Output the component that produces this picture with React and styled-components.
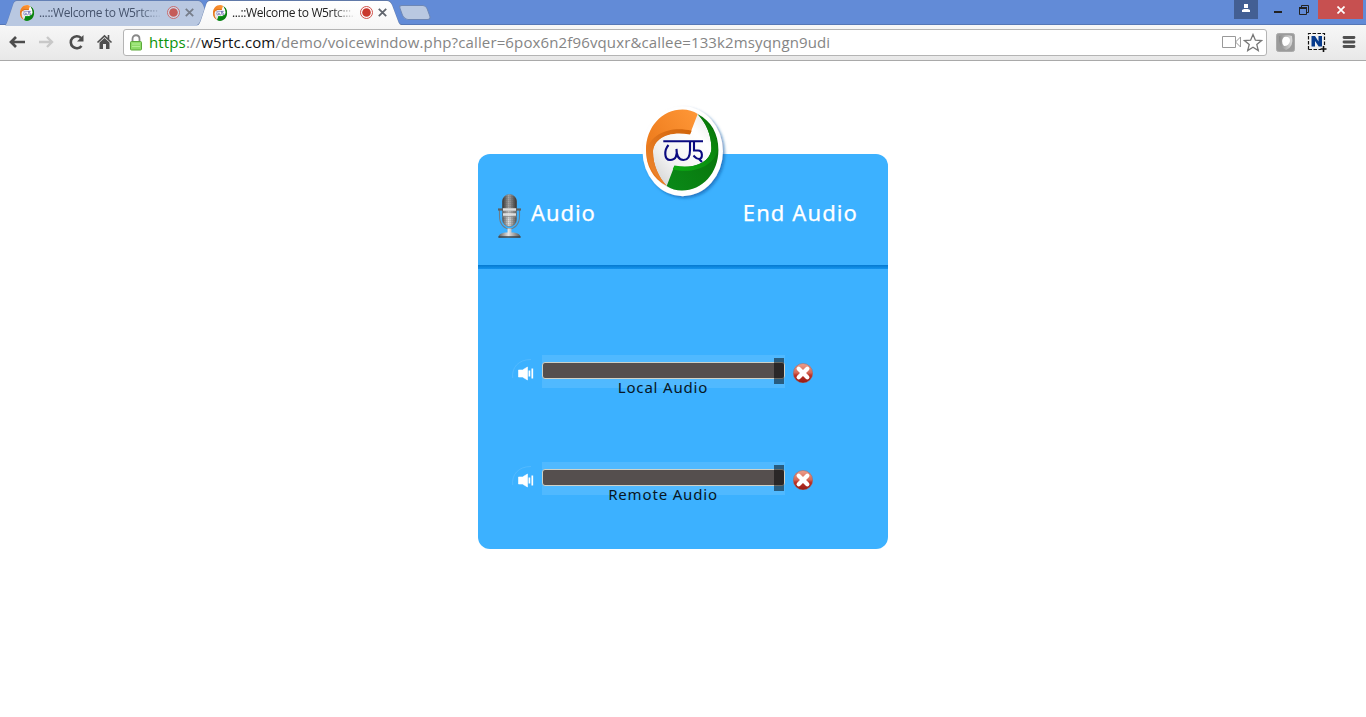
import React from "react";
import styled, { createGlobalStyle } from "styled-components";

const Global = createGlobalStyle`
  * { box-sizing: border-box; }
  body { margin: 0; background: #fff; overflow: hidden; }
  svg { display: block; flex: none; }
`;

const Screen = styled.div`
  width: 1366px;
  height: 717px;
  display: flex;
  flex-direction: column;
  font-family: "Open Sans", "Noto Sans", sans-serif;
`;

const TitleBar = styled.header`
  height: 25px;
  flex: none;
  display: flex;
  align-items: flex-start;
  padding-left: 5px;
  background: #628bd7;
  border-bottom: 1px solid #5577b6;
`;

const Tab = styled.div`
  position: relative;
  isolation: isolate;
  width: ${(p) => (p.$active ? 208 : 200)}px;
  height: 25px;
  margin-left: ${(p) => (p.$active ? -8 : 0)}px;
  padding-left: ${(p) => (p.$active ? 15 : 14)}px;
  display: flex;
  align-items: center;
  z-index: ${(p) => (p.$active ? 2 : 1)};
  &::before, &::after {
    content: "";
    position: absolute;
    inset: 0;
    z-index: -2;
    background: ${(p) => (p.$active ? "#6079a8" : "#6581b6")};
    clip-path: ${(p) =>
      p.$active
        ? 'path("M0 25C2 24 3 22 4 19L9 4Q10 0 13 0H190Q193 0 195 4L201 20Q202 24 206 25Z")'
        : 'path("M0 25C1 24 2 22 3 19L8 4Q9 0 12 0H193Q196 0 198 4L200 9V25Z")'};
  }
  &::after {
    z-index: -1;
    transform: translateY(1px);
    background: ${(p) => (p.$active ? "linear-gradient(#fff, #f7f7f7)" : "#b9c8e1")};
  }
`;

const TabTitle = styled.span`
  width: 126px;
  margin-left: 4px;
  white-space: nowrap;
  font: 12px/16px "Open Sans", sans-serif;
  letter-spacing: -0.36px;
  color: ${(p) => (p.$active ? "#222" : "#46546d")};
  mask-image: linear-gradient(90deg, #000 100px, transparent 123px);
`;

const TabControls = styled.div`
  display: flex;
  align-items: center;
  gap: 5px;
  margin-left: 2px;
  opacity: ${(p) => (p.$active ? 1 : 0.75)};
`;

const NewTab = styled.div`
  width: 28px;
  height: 15px;
  margin: 5px 0 0 -4px;
  border: 1px solid #6e87b5;
  border-radius: 3px 4px 4px 5px;
  background: #b9c8e1;
  transform: skewX(20deg);
`;

const WindowButtons = styled.div`
  margin-left: auto;
  display: flex;
  height: 19px;
`;

const WindowButton = styled.div`
  width: ${(p) => p.$w}px;
  height: 19px;
  padding-bottom: ${(p) => p.$lift || 0}px;
  display: flex;
  align-items: center;
  justify-content: center;
  background: ${(p) => p.$bg || "transparent"};
`;

const Toolbar = styled.nav`
  height: 36px;
  flex: none;
  display: flex;
  align-items: center;
  padding: 0 8px 1px;
  background: linear-gradient(#f7f7f7, #e8e8e8);
  border-bottom: 1px solid #a9a9a9;
`;

const NavIcons = styled.div`
  display: flex;
  align-items: center;
  gap: 12px;
  width: 115px;
  svg:nth-child(n + 3) { margin-left: -0.5px; }
`;

const Address = styled.div`
  width: 1144px;
  height: 27px;
  display: flex;
  align-items: center;
  padding: 0 3px 0 6px;
  border: 1px solid #b4b4b4;
  border-radius: 3px;
  background: #fff;
`;

const Url = styled.div`
  flex: 1;
  margin-left: 7px;
  font: 15px/22px "Open Sans", sans-serif;
  letter-spacing: 0.135px;
  color: #858585;
  white-space: nowrap;
`;
const Secure = styled.span`color: #0a930a;`;
const Host = styled.span`color: #111;`;

const Extensions = styled.div`
  display: flex;
  align-items: center;
  gap: 12px;
  margin-left: 9px;
`;

const Page = styled.main`
  flex: 1;
  display: flex;
  justify-content: center;
  align-items: flex-start;
  padding-top: 93px;
`;

const Card = styled.section`
  position: relative;
  width: 410px;
  height: 395px;
  border-radius: 12px;
  background: #3cb1ff;
  font-family: "Noto Sans", sans-serif;
`;

const Logo = styled.div`
  position: absolute;
  left: 161px;
  top: -51px;
`;

const CardHeader = styled.div`
  height: 115px;
  display: flex;
  align-items: flex-start;
  padding: 40px 30px 0 19px;
  background: linear-gradient(#0579cf, #1494ee) bottom / 100% 4px no-repeat;
`;

const Heading = styled.div`
  margin: ${(p) => (p.$end ? "0 0 0 auto" : "0 0 0 7px")};
  padding-top: 3px;
  font-size: 22px;
  line-height: 30px;
  letter-spacing: ${(p) => (p.$end ? 1.1 : 0.9)}px;
  color: #fff;
  white-space: nowrap;
  -webkit-text-stroke: 0.25px #fff;
`;

const Channels = styled.div`
  display: flex;
  flex-direction: column;
  gap: 74px;
  padding: 86px 0 0 33px;
`;

const Channel = styled.div`
  display: flex;
  height: 33px;
`;

const SpeakerSlot = styled.div`
  width: 31px;
  padding-top: 3px;
`;

const Slider = styled.div`
  width: 243px;
  height: 33px;
  padding-top: 7px;
  background: #50b9ff;
`;

const Track = styled.div`
  height: 17px;
  display: flex;
  justify-content: flex-end;
  border: 1px solid #cfd2c8;
  border-radius: 3px;
  background: #554f4e;
`;

const Thumb = styled.div`
  width: 10px;
  height: 26px;
  margin-top: -5px;
  background: rgba(0, 0, 0, 0.5);
`;

const Label = styled.div`
  margin-top: -2px;
  padding-right: 1px;
  font-size: 15px;
  line-height: 20px;
  letter-spacing: 0.83px;
  text-align: center;
  color: #071624;
`;

const CloseSlot = styled.div`
  padding: 8px 0 0 8px;
`;

function Swirl({ fill, edge }) {
  return (
    <>
      <path d="M27.7 82.700C14 76 7 63 7 47C7 24 23 6.500 43.500 6.500Q52 6.500 58.700 11L51 31C28 27 14 37 14 49C14 62 20 75 27.700 82.700Z" fill={fill} />
      <path d="M7.500 47C12 31 31 22.500 52.700 27.700L51 31.500C28 27 14 37 14 49C14 62 20 75 27.700 82.700C15 74 8 62 7.500 47Z" fill={edge} />
    </>
  );
}

function Emblem({ id }) {
  return (
    <>
      <defs>
        <linearGradient id={id + "o"} x1="0" y1="1" x2="1" y2="0">
          <stop offset="0" stopColor="#e67012" /><stop offset="1" stopColor="#ff9838" />
        </linearGradient>
        <linearGradient id={id + "oe"} x1="0" y1="1" x2="1" y2="0">
          <stop offset="0" stopColor="#f08a35" /><stop offset=".5" stopColor="#e0741c" /><stop offset="1" stopColor="#cf6208" />
        </linearGradient>
        <linearGradient id={id + "g"} x1="1" y1="0" x2="0" y2="1">
          <stop offset="0" stopColor="#0a8a18" /><stop offset="1" stopColor="#087008" />
        </linearGradient>
        <linearGradient id={id + "ge"} x1="1" y1="0" x2="0" y2="1">
          <stop offset="0" stopColor="#0cae15" /><stop offset="1" stopColor="#087008" />
        </linearGradient>
        <linearGradient id={id + "w"} x1="0" y1="1" x2="1" y2="0">
          <stop offset="0" stopColor="#c4c4c4" /><stop offset=".35" stopColor="#f2f2f2" /><stop offset=".7" stopColor="#fff" /><stop offset="1" stopColor="#dedede" />
        </linearGradient>
      </defs>
      <ellipse cx="43.200" cy="47" rx="36.200" ry="40.500" fill={`url(#${id}w)`} />
      <Swirl fill={`url(#${id}o)`} edge={`url(#${id}oe)`} />
      <g transform="rotate(180 43.200 47)"><Swirl fill={`url(#${id}g)`} edge={`url(#${id}ge)`} /></g>
      <path d="M24.300 38.300H64M29.500 42C25 47 25 57 31 57C37 57 38.500 52 37.500 46C37.500 53 39 57 44.500 57C50 57 51 52 51 47V38.300M55 38.300V47.500H59C64 47.500 64 55.500 60 56C57.500 56 56 54 54.500 52.500M60 56L63 59" fill="none" stroke="#0a0a80" strokeWidth="2.100" />
    </>
  );
}

function BigLogo() {
  return (
    <svg width="90" height="101" viewBox="0 0 90 101">
      <defs><filter id="shade" x="-20%" y="-20%" width="150%" height="150%"><feDropShadow dx="2" dy="2" stdDeviation="1.500" floodColor="#075da8" floodOpacity=".65" /></filter></defs>
      <ellipse cx="43.700" cy="48.200" rx="40.200" ry="45" fill="#fff" filter="url(#shade)" />
      <Emblem id="big" />
    </svg>
  );
}

const Favicon = ({ id }) => (
  <svg width="16" height="16" viewBox="2 6 82 82" preserveAspectRatio="none"><Emblem id={id} /></svg>
);

const Mic = () => (
  <svg width="27" height="46" viewBox="0 0 27 46">
    <defs>
      <linearGradient id="metal"><stop offset="0" stopColor="#5c5c5c" /><stop offset=".45" stopColor="#e6e6e6" /><stop offset="1" stopColor="#555" /></linearGradient>
      <linearGradient id="dome"><stop offset="0" stopColor="#333" /><stop offset=".45" stopColor="#aaa" /><stop offset="1" stopColor="#333" /></linearGradient>
      <pattern id="mesh" width="2" height="2" patternUnits="userSpaceOnUse"><path d="M0 .5H2M.5 0V2" stroke="#444" strokeWidth=".5" opacity=".3" /></pattern>
    </defs>
    <path d="M2.500 16V22C2.500 39 22.500 39 22.500 22V16" fill="none" stroke="#6e7e88" strokeWidth="1.100" />
    <rect x="5.500" y=".5" width="14" height="32" rx="7" fill="url(#metal)" stroke="#666" strokeWidth=".6" />
    <path d="M5.500 14V7.500C5.500-1.500 19.500-1.500 19.500 7.500V14Z" fill="url(#dome)" />
    <rect x="5.500" y="1" width="14" height="31" rx="7" fill="url(#mesh)" />
    <path d="M1 15.500H24" stroke="#5a6063" strokeWidth="2.200" />
    <path d="M6 15.500H19M6 20.500H19" stroke="#dedede" strokeWidth="2.600" />
    <path d="M5.500 18H19.500M5.500 22.700H19.500" stroke="#8a8a8a" strokeWidth=".8" />
    <path d="M10.500 34.500H14.500V38.500C20 38.500 23.500 40 23.500 43.500H1.500C1.500 40 5 38.500 10.500 38.500Z" fill="url(#metal)" />
    <path d="M1.500 43H23.500" stroke="#39454b" strokeWidth="1.500" />
  </svg>
);

const Speaker = () => (
  <svg width="31" height="28" viewBox="0 0 31 28">
    <path d="M1.700 20C.5 10 7 1.500 20 1.500" fill="none" stroke="#62c1ff" strokeWidth=".8" opacity=".7" />
    <path d="M7.500 12H11.500L16.500 9V22L11.500 19H7.500Z" fill="#fff" stroke="#fff" strokeWidth=".6" />
    <path d="M18.400 12.500V18.500M21.300 10.500V20.500" stroke="#fff" strokeWidth="1.700" />
  </svg>
);

const CloseBall = ({ id }) => (
  <svg width="20" height="20" viewBox="0 0 20 20">
    <defs><linearGradient id={id} x1="0" y1="0" x2="0" y2="1"><stop offset="0" stopColor="#eca08e" /><stop offset=".48" stopColor="#d56755" /><stop offset=".6" stopColor="#bd3228" /><stop offset="1" stopColor="#941a14" /></linearGradient></defs>
    <circle cx="10" cy="10.200" r="9.700" fill={`url(#${id})`} stroke="#a6625b" strokeWidth=".5" />
    <path d="M5.700 5.700L14.300 14.300M14.300 5.700L5.700 14.300" stroke="#fff" strokeWidth="4.300" strokeLinecap="round" />
  </svg>
);

const BrowserTab = ({ active, id }) => (
  <Tab $active={active}>
    <Favicon id={id} />
    <TabTitle $active={active}>...::Welcome to W5rtc:::...</TabTitle>
    <TabControls $active={active}>
      <svg width="13" height="13" viewBox="0 0 13 13"><circle cx="6.500" cy="6.500" r="6" fill="#fff" fillOpacity=".4" stroke="#cc4038" strokeWidth=".9" /><circle cx="6.500" cy="6.500" r="4.300" fill="#c9372c" /></svg>
      <svg width="9" height="9" viewBox="0 0 9 9"><path d="M.8.800L8.200 8.200M8.200.800L.8 8.200" stroke="#60656d" strokeWidth="1.800" /></svg>
    </TabControls>
  </Tab>
);

const AudioChannel = ({ name, id }) => (
  <Channel>
    <SpeakerSlot><Speaker /></SpeakerSlot>
    <Slider><Track><Thumb /></Track><Label>{name}</Label></Slider>
    <CloseSlot><CloseBall id={id} /></CloseSlot>
  </Channel>
);

export default function App() {
  return (
    <Screen>
      <Global />
      <TitleBar>
        <BrowserTab id="tab1" />
        <BrowserTab id="tab2" active />
        <NewTab />
        <WindowButtons>
          <WindowButton $w={24} $lift={3} $bg="#435f93"><svg width="8" height="9" viewBox="0 0 8 9"><path d="M2 0H6V4H2ZM0 8V6L2 5H6L8 6V8Z" fill="#fff" /></svg></WindowButton>
          <WindowButton $w={40}><svg width="8" height="9"><path d="M0 6H8V8H0Z" fill="#222" /></svg></WindowButton>
          <WindowButton $w={12}><svg width="10" height="10"><path d="M.5 2.500H7.500V9.500H.5ZM2.500 2V.500H9.500V7.500H8" fill="none" stroke="#222" /><path d="M0 2H8V4H0Z" fill="#222" /></svg></WindowButton>
          <WindowButton $w={8} />
          <WindowButton $w={45} $bg="#c75050"><svg width="8" height="8"><path d="M.5.500L7.500 7.500M7.500.500L.5 7.500" stroke="#fff" strokeWidth="1.700" /></svg></WindowButton>
          <WindowButton $w={3} />
        </WindowButtons>
      </TitleBar>
      <Toolbar>
        <NavIcons>
          <svg width="18" height="16"><path d="M8 3L3 8L8 13M3 8H17" fill="none" stroke="#4c4c4c" strokeWidth="2.700" /></svg>
          <svg width="18" height="16"><path d="M9 3L14 8L9 13M14 8H1" fill="none" stroke="#c8c8c8" strokeWidth="2.400" /></svg>
          <svg width="17" height="17"><path d="M13.500 12A6 6 0 1 1 13 4" fill="none" stroke="#4d4d4d" strokeWidth="2.600" /><path d="M15.500 1V7.500H9Z" fill="#4d4d4d" /></svg>
          <svg width="17" height="16"><path d="M1.500 8.500L8.500 1.800L15.500 8.500M12.500 1V6" fill="none" stroke="#505050" strokeWidth="1.600" /><path d="M3.500 8.500L8.500 4L13.500 8.500V15H10V10H7V15H3.500Z" fill="#505050" /></svg>
        </NavIcons>
        <Address>
          <svg width="12" height="17"><path d="M2.500 9V5C2.500 0 9.500 0 9.500 5V9" fill="none" stroke="#888" strokeWidth="1.800" /><rect x=".5" y="7.500" width="11" height="8.500" rx="1" fill="#8edc68" stroke="#5ca83b" /><path d="M2 10H10M2 12.500H10" stroke="#b4ef94" /></svg>
          <Url><Secure>https</Secure>://<Host>w5rtc.com</Host>/demo/voicewindow.php?caller=6pox6n2f96vquxr&amp;callee=133k2msyqngn9udi</Url>
          <svg width="21" height="14"><path d="M.5 1.500H13.500V12.500H.5ZM13.500 7L18.500 2V12Z" fill="none" stroke="#999" /></svg>
          <svg width="20" height="19"><path d="M10 1.500L12.400 7.200L18.500 7.600L13.800 11.600L15.300 17.600L10 14.300L4.700 17.600L6.200 11.600L1.500 7.600L7.600 7.200Z" fill="#fff" stroke="#777" strokeWidth="1.300" /></svg>
        </Address>
        <Extensions>
          <svg width="19" height="19"><defs><linearGradient id="shield"><stop stopColor="#888" /><stop offset="1" stopColor="#ddd" /></linearGradient></defs><rect x=".5" y=".5" width="18" height="18" rx="2" fill="#9b9b9b" stroke="#aaa" /><path d="M3 3Q10 1 16 3Q18 14 10 17Q2 14 3 3Z" fill="url(#shield)" /><path d="M8 4Q14 3 14 8Q13 13 8 13Q4 8 8 4Z" fill="#fff" /></svg>
          <svg width="20" height="20"><path d="M1.500 17.500V1.500H17.500V14M1.500 17.500H14" fill="none" stroke="#111" strokeWidth="1.200" strokeDasharray="3.500 1.500" /><path d="M4.500 14.500V4H8L11.500 9.500V4H15V14.500H11.700L8 9V14.500Z" fill="#063a8c" /><path d="M16.500 14V20M13.500 17H19.500" stroke="#111" strokeWidth="1.600" /></svg>
          <svg width="18" height="14"><path d="M5 2.500H15M5 7H15M5 11.500H15" stroke="#505050" strokeWidth="2.800" strokeLinecap="round" /></svg>
        </Extensions>
      </Toolbar>
      <Page>
        <Card>
          <Logo><BigLogo /></Logo>
          <CardHeader><Mic /><Heading>Audio</Heading><Heading $end>End Audio</Heading></CardHeader>
          <Channels>
            <AudioChannel name="Local Audio" id="close1" />
            <AudioChannel name="Remote Audio" id="close2" />
          </Channels>
        </Card>
      </Page>
    </Screen>
  );
}
